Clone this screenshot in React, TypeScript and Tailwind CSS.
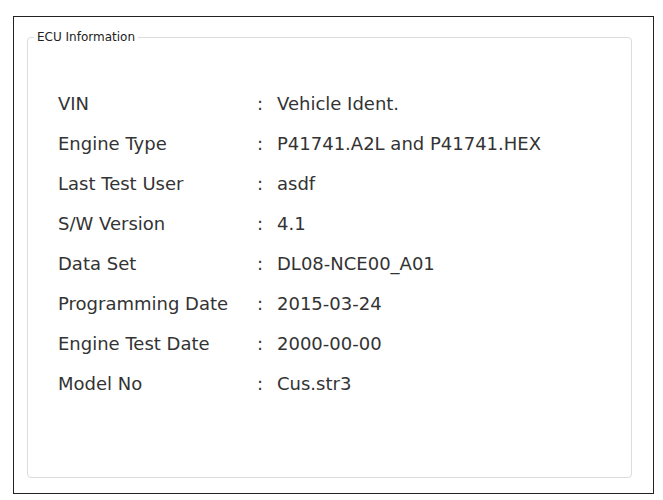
const rows: [string, string][] = [
  ["VIN", "Vehicle Ident."],
  ["Engine Type", "P41741.A2L and P41741.HEX"],
  ["Last Test User", "asdf"],
  ["S/W Version", "4.1"],
  ["Data Set", "DL08-NCE00_A01"],
  ["Programming Date", "2015-03-24"],
  ["Engine Test Date", "2000-00-00"],
  ["Model No", "Cus.str3"],
];

export default function App() {
  return (
    <div className="w-[663px] h-[500px] bg-white pt-[16px] pl-[13px]">
      <div className="w-[641px] h-[478px] border border-[#222] bg-white pt-[13px] pl-[13px]">
        <fieldset className="w-[605px] h-[448px] rounded-[4px] border border-[#dcdcdc] p-0 m-0">
          <legend className="ml-[6px] px-[3px] text-[12px] leading-[14px] text-[#222] font-['DejaVu_Sans',sans-serif]">
            ECU Information
          </legend>
          <div className="flex flex-col pl-[30px] pt-[49px] font-['DejaVu_Sans',sans-serif] text-[18px] leading-[22px] text-[#333]">
            {rows.map(([label, value]) => (
              <div key={label} className="flex h-[40px] items-start">
                <span className="w-[199px]">{label}</span>
                <span className="w-[20px]">:</span>
                <span>{value}</span>
              </div>
            ))}
          </div>
        </fieldset>
      </div>
    </div>
  );
}
